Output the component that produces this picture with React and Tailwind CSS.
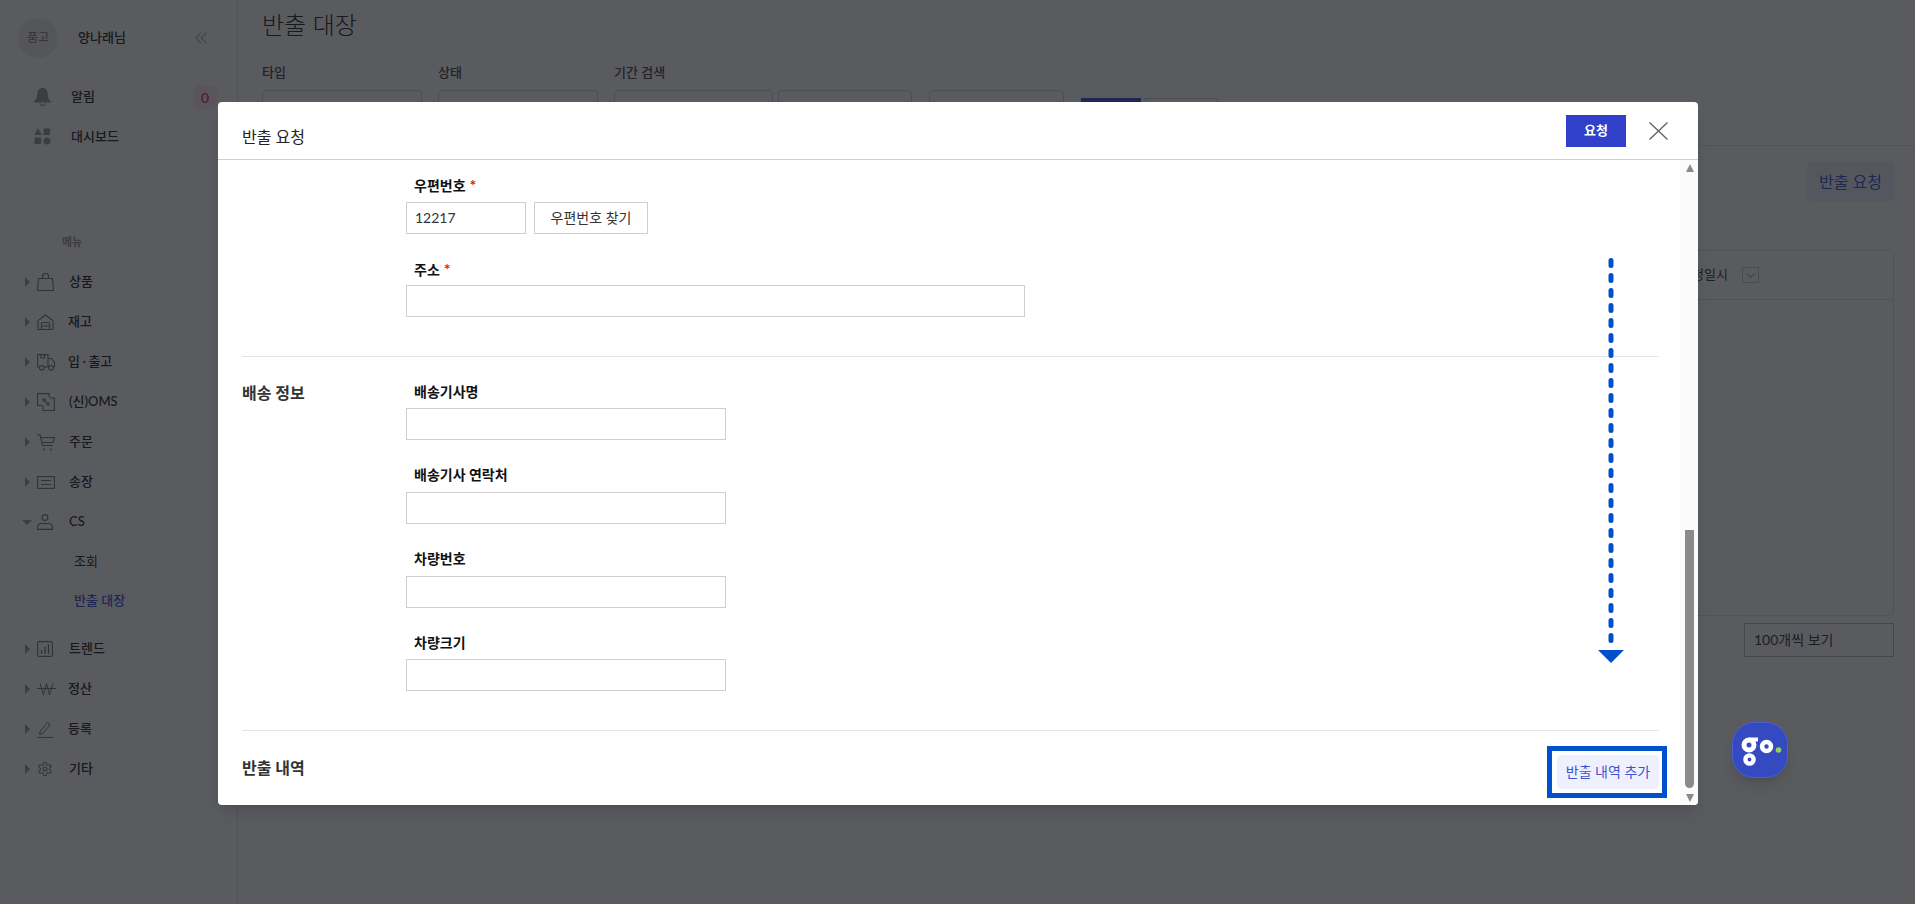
import React from 'react';

const FONT = { fontFamily: 'Lato, "Noto Sans CJK KR", sans-serif' };

// sidebar line icons
const IconBag = () => (
  <svg width="17" height="18" viewBox="0 0 17 18" fill="none" stroke="currentColor" strokeWidth="1.1">
    <path d="M1.500 5.500h14l1 12H.5z" />
    <path d="M5.500 5.500V3.500a3 3 0 0 1 6 0v2" />
  </svg>
);
const IconHouse = () => (
  <svg width="17" height="16" viewBox="0 0 17 16" fill="none" stroke="currentColor" strokeWidth="1.1">
    <path d="M1 15.500V6.500L8.500 1 16 6.500v9z" />
    <path d="M4.500 15.500V9.500q0-1 1-1h6q1 0 1 1v6M4.500 12h8" />
  </svg>
);
const IconTruck = () => (
  <svg width="18" height="17" viewBox="0 0 18 17" fill="none" stroke="currentColor" strokeWidth="1.1">
    <path d="M2.500 13H.6V.6h10.400V13H7" />
    <path d="M11 4.500h3.500l3 3.500v5h-1.500M11 13h1" />
    <path d="M4 .6v3.400h3.500V.6" />
    <circle cx="4.800" cy="13.800" r="2.300" />
    <circle cx="14" cy="13.800" r="2.300" />
  </svg>
);
const IconOms = () => (
  <svg width="18" height="18" viewBox="0 0 18 18" fill="none" stroke="currentColor" strokeWidth="1.1">
    <path d="M5.500 12.500H.6V.6h11.400V4" />
    <path d="M6 12.500v5h11.400V5H12.500" />
    <circle cx="7" cy="7" r="1.200" />
    <circle cx="11" cy="11" r="1.200" />
    <path d="M8 8l2 2" />
  </svg>
);
const IconCart = () => (
  <svg width="18" height="17" viewBox="0 0 18 17" fill="none" stroke="currentColor" strokeWidth="1.1">
    <path d="M0 .8h3l2.500 10.700h10" />
    <path d="M4 3.500h13.500l-1.500 5H5.300" />
    <path d="M6 15.500h1.500M13 15.500h1.500" strokeWidth="1.800" />
  </svg>
);
const IconList = () => (
  <svg width="18" height="13" viewBox="0 0 18 13" fill="none" stroke="currentColor" strokeWidth="1.1">
    <rect x=".6" y=".6" width="16.800" height="11.800" />
    <path d="M4 4.500h10M4 8.500h10" />
  </svg>
);
const IconUser = () => (
  <svg width="16" height="16" viewBox="0 0 16 16" fill="none" stroke="currentColor" strokeWidth="1.1">
    <circle cx="8" cy="3.500" r="2.900" />
    <path d="M.6 15.400v-2.400c0-2 2-3.500 3.400-3.500h8c1.400 0 3.400 1.500 3.400 3.500v2.400z" />
  </svg>
);
const IconChart = () => (
  <svg width="16" height="16" viewBox="0 0 16 16" fill="none" stroke="currentColor" strokeWidth="1.1">
    <rect x=".6" y=".6" width="14.800" height="14.800" rx="1.500" />
    <path d="M4.500 13V9M8 13V6M11.500 13V3.500" strokeWidth="1.300" />
  </svg>
);
const IconWon = () => (
  <svg width="19" height="13" viewBox="0 0 19 13" fill="none" stroke="currentColor" strokeWidth="1">
    <path d="M3 .5l3.500 11.500L9.500 .5l3 11.500L16 .5M0 5.500h19" />
  </svg>
);
const IconPen = () => (
  <svg width="16" height="17" viewBox="0 0 16 17" fill="none" stroke="currentColor" strokeWidth="1">
    <path d="M0 16.400h16" />
    <path d="M2.500 13.500l.7-3.500 7.300-8.500 2.600 2.200-7.300 8.500z" />
  </svg>
);
const IconGear = () => (
  <svg width="16" height="16" viewBox="0 0 24 24" fill="none" stroke="currentColor" strokeWidth="1.600">
    <path d="M12.220 2h-.44a2 2 0 0 0-2 2v.18a2 2 0 0 1-1 1.730l-.43.25a2 2 0 0 1-2 0l-.15-.08a2 2 0 0 0-2.730.73l-.22.38a2 2 0 0 0 .73 2.730l.15.1a2 2 0 0 1 1 1.720v.51a2 2 0 0 1-1 1.740l-.15.09a2 2 0 0 0-.73 2.730l.22.38a2 2 0 0 0 2.730.73l.15-.08a2 2 0 0 1 2 0l.43.25a2 2 0 0 1 1 1.730V20a2 2 0 0 0 2 2h.44a2 2 0 0 0 2-2v-.18a2 2 0 0 1 1-1.730l.43-.25a2 2 0 0 1 2 0l.15.08a2 2 0 0 0 2.730-.73l.22-.39a2 2 0 0 0-.73-2.730l-.15-.08a2 2 0 0 1-1-1.740v-.5a2 2 0 0 1 1-1.740l.15-.09a2 2 0 0 0 .73-2.730l-.22-.38a2 2 0 0 0-2.730-.73l-.15.08a2 2 0 0 1-2 0l-.43-.25a2 2 0 0 1-1-1.730V4a2 2 0 0 0-2-2z" />
    <circle cx="12" cy="12" r="3" />
  </svg>
);

const MENU_TOP = [
  { label: '상품', icon: <IconBag /> },
  { label: '재고', icon: <IconHouse />, tight: true },
  { label: <>입<span className="mx-[2.5px]">·</span>출고</>, icon: <IconTruck />, tight: true },
  { label: '(신)OMS', icon: <IconOms /> },
  { label: '주문', icon: <IconCart /> },
  { label: '송장', icon: <IconList /> },
];
const MENU_BOTTOM = [
  { label: '트렌드', icon: <IconChart /> },
  { label: '정산', icon: <IconWon />, tight: true },
  { label: '등록', icon: <IconPen />, tight: true },
  { label: '기타', icon: <IconGear /> },
];

function MenuRow({ label, icon, open, tight }) {
  return (
    <div className="flex h-10 items-center text-[13px] font-medium text-[#222]">
      <div className="flex w-[37px] justify-end pr-[7px]">
        {open ? (
          <span className="mr-[-2px] h-0 w-0 border-x-[5px] border-t-[5px] border-x-transparent border-t-[#999]" />
        ) : (
          <span className="h-0 w-0 border-y-[5px] border-l-[5px] border-y-transparent border-l-[#999]" />
        )}
      </div>
      <div className="flex w-[32px] justify-start text-[#777]">{icon}</div>
      <span className={tight ? '-ml-px' : ''}>{label}</span>
    </div>
  );
}

function Sidebar() {
  return (
    <aside className="h-full w-[238px] shrink-0 border-r border-[#e8e8ea] bg-white">
      <div className="flex items-center pl-[18px] pt-[18px]">
        <div className="flex h-10 w-10 items-center justify-center rounded-full bg-[#ededed] text-[12px] text-[#777]">품고</div>
        <span className="ml-5 text-[13px] font-medium text-[#222]">양나래님</span>
        <svg className="ml-[69px]" width="12" height="12" viewBox="0 0 12 12" fill="none" stroke="#888" strokeWidth="1">
          <path d="M6 .5L.8 6 6 11.500M11.500 .5L6.300 6l5.200 5.500" />
        </svg>
      </div>
      <div className="mt-[19px] flex h-[40px] items-center pl-[34px] text-[13px] font-medium text-[#222]">
        <svg width="17" height="18" viewBox="0 0 17 18" fill="#999">
          <path d="M8.500 0C5 0 3.300 2.500 3.300 6c0 3.500-1 5.500-3.300 7.500v1h17v-1c-2.300-2-3.300-4-3.300-7.500C13.700 2.500 12 0 8.500 0z" />
          <path d="M5.500 15.200a3 3 0 0 0 6 0h-1.200a1.800 1.800 0 0 1-3.600 0z" />
        </svg>
        <span className="ml-5">알림</span>
        <span className="ml-auto mr-[20px] flex h-6 w-6 items-center justify-center rounded-md bg-[#fdecee] text-[14px] text-[#d9303a]">0</span>
      </div>
      <div className="flex h-[39px] items-center pl-[34px] text-[13px] font-medium text-[#222]">
        <svg width="17" height="17" viewBox="0 0 17 17" fill="#999">
          <path d="M4 0l3.800 7H.2z" />
          <rect x="9.500" y="0.500" width="6.500" height="6.500" />
          <rect x="0.500" y="9.500" width="6.500" height="6.500" />
          <circle cx="13" cy="13" r="3.500" />
        </svg>
        <span className="ml-5">대시보드</span>
      </div>
      <div className="mt-[78px] pl-[62px] text-[11px] font-bold leading-4 text-[#9a9a9a]">메뉴</div>
      <nav className="mt-[12px]">
        {MENU_TOP.map((item, i) => <MenuRow key={i} {...item} />)}
        <MenuRow label="CS" icon={<IconUser />} open />
        <div className="flex h-[39px] items-center pl-[74px] text-[13px] text-[#222]">조회</div>
        <div className="flex h-[39px] items-center pl-[74px] text-[13px] font-medium text-[#3f51d0]">반출 대장</div>
        <div className="h-[9px]" />
        {MENU_BOTTOM.map((item, i) => <MenuRow key={i} {...item} />)}
      </nav>
    </aside>
  );
}

function FilterBox({ label, width }) {
  return (
    <div className={width}>
      <div className="h-5 text-[13px] font-medium leading-[18px] text-[#444]">{label || '\u00a0'}</div>
      <div className="mt-[7px] h-9 rounded border border-[#d8d8da] bg-white" />
    </div>
  );
}

function MainPage() {
  return (
    <main className="min-w-0 flex-1">
      <div className="px-6">
        <h1 className="pt-[9px] text-2xl font-light leading-8 text-[#222]">반출 대장</h1>
        <div className="mt-[22px] flex items-start gap-4">
          <FilterBox label="타입" width="w-[160px]" />
          <FilterBox label="상태" width="w-[160px]" />
          <div className="flex w-[299px] gap-[5px]">
            <FilterBox label="기간 검색" width="w-[159px]" />
            <FilterBox width="w-[134px]" />
          </div>
          <FilterBox width="w-[135px]" />
          <div className="ml-px flex gap-1 pt-[35px]">
            <div className="h-9 w-[60px] bg-[#3f51d0]" />
            <div className="h-9 w-[73px] border border-[#d0d0d0] bg-white" />
          </div>
        </div>
      </div>
      <div className="mt-[11px] border-t border-[#e5e5e7] px-[21px] pl-6">
        <div className="flex justify-end pt-4">
          <div className="flex h-[39px] w-[87px] items-center justify-center rounded bg-[#eef1fd] text-base text-[#3f51d0]">반출 요청</div>
        </div>
        <div className="mt-[49px] h-[366px] rounded-md border border-[#e2e2e4]">
          <div className="flex h-[49px] items-center justify-end border-b border-[#e2e2e4] pr-[134px] text-[13px] text-[#333]">
            <span>요청일시</span>
            <span className="ml-[14px] flex h-4 w-[17px] items-center justify-center border border-[#ccc] text-[#888]">
              <svg width="9" height="5" viewBox="0 0 9 5" fill="none" stroke="currentColor"><path d="M.5.500l4 4 4-4" /></svg>
            </span>
          </div>
        </div>
        <div className="mt-[7px] flex justify-end">
          <div className="flex h-[34px] w-[150px] items-center border border-[#bdbdbd] pl-[9px] text-sm text-[#333]">100개씩 보기</div>
        </div>
      </div>
    </main>
  );
}

function Field({ label, required, inputClass, children, last }) {
  return (
    <div className={last ? '' : 'mb-6'}>
      <div className="mb-[7.67px] h-5 pl-2 text-sm font-bold leading-[22px] text-[#111]">
        {label}
        {required && <span className="ml-1 text-base leading-[22px] text-[#e02020]">*</span>}
      </div>
      <div className="flex gap-2">
        <input readOnly defaultValue={children} className={`h-8 border border-[#cfcfcf] bg-white px-2 text-sm text-[#333] outline-none ${inputClass}`} />
        {label === '우편번호' && (
          <div className="flex h-8 w-[114px] items-center justify-center border border-[#cfcfcf] text-sm text-[#333]">우편번호 찾기</div>
        )}
      </div>
    </div>
  );
}

function Modal() {
  return (
    <div className="absolute left-[218px] top-[102px] flex h-[703px] w-[1480px] flex-col overflow-hidden rounded bg-white shadow-lg">
      <header className="flex h-[58px] shrink-0 items-start border-b border-[#cfcfcf] pl-6 pr-[30px] pt-[13px]">
        <h2 className="mt-[10px] text-base leading-6 text-[#222]">반출 요청</h2>
        <button className="ml-auto flex h-8 w-[60px] items-center justify-center bg-[#3040c8] text-[13px] font-bold text-white">요청</button>
        <svg className="ml-[23px] mt-[7px]" width="19" height="18" viewBox="0 0 19 18" fill="none" stroke="#666" strokeWidth="1.4">
          <path d="M.5.500l18 17M18.500.500l-18 17" />
        </svg>
      </header>
      <div className="relative flex min-h-0 flex-1">
        <div className="min-w-0 flex-1 overflow-hidden pl-6 pr-[21px]">
          <section className="border-b border-[#e4e4ea] pb-[15px] pl-[164px] pt-[14px]">
            <Field label="우편번호" required inputClass="w-[120px]">12217</Field>
            <Field label="주소" required inputClass="w-[619px]" />
          </section>
          <section className="flex border-b border-[#e4e4ea] pb-[15px] pt-[23.5px]">
            <h3 className="w-[164px] shrink-0 text-base font-bold leading-6 text-[#333]">배송 정보</h3>
            <div className="flex-1">
              <Field label="배송기사명" inputClass="w-[320px]" />
              <Field label="배송기사 연락처" inputClass="w-[320px]" />
              <Field label="차량번호" inputClass="w-[320px]" />
              <Field label="차량크기" inputClass="w-[320px]" />
            </div>
          </section>
          <section className="flex items-start justify-between pt-6">
            <h3 className="mt-px text-base font-bold leading-6 text-[#333]">반출 내역</h3>
            <div className="relative">
              <button className="flex h-[34px] w-[102px] items-center justify-center whitespace-nowrap rounded bg-[#eef1fd] text-sm text-[#3f51d0]">반출 내역 추가</button>
              <div className="pointer-events-none absolute -bottom-[9px] -left-[10px] -right-2 -top-[9px] border-[5px] border-[#0050cc]" />
            </div>
          </section>
        </div>
        {/* scrollbar */}
        <div className="flex w-[18px] shrink-0 flex-col items-center bg-[#fbfbfb] pl-[1px]">
          <span className="mt-[4px] h-0 w-0 border-x-[4.500px] border-b-[8px] border-x-transparent border-b-[#8a8a8a]" />
          <div className="mt-[358px] h-[258px] w-[9px] rounded-b-md bg-[#8a8a8a]" />
          <span className="mt-[6px] h-0 w-0 border-x-[4.500px] border-t-[8px] border-x-transparent border-t-[#8a8a8a]" />
        </div>
        {/* scroll hint drawn over the form */}
        <svg className="pointer-events-none absolute left-[1380px] top-[98px]" width="27" height="406" viewBox="0 0 27 406" fill="none">
          <path d="M13 2.500V390" stroke="#0050cc" strokeWidth="5" strokeLinecap="round" strokeDasharray="5 10" />
          <path d="M0 392h26l-13 13z" fill="#0050cc" />
        </svg>
      </div>
    </div>
  );
}

function GoBadge() {
  return (
    <div className="absolute left-[1732px] top-[722px] h-14 w-14 rounded-[22px] border border-[#4a5fd0] bg-[#3549c0] shadow-lg">
      <svg width="54" height="54" viewBox="1 1 54 54" fill="none" stroke="#fff">
        <circle cx="17" cy="23" r="5" strokeWidth="5" />
        <circle cx="17.500" cy="37.500" r="4.100" strokeWidth="4.400" />
        <path d="M17 17.500h9" strokeWidth="4" />
        <circle cx="34.500" cy="24.500" r="4.500" strokeWidth="4.500" />
        <circle cx="46.500" cy="28" r="2.800" fill="#8ed35a" stroke="none" />
      </svg>
    </div>
  );
}

export default function App() {
  return (
    <div className="relative flex h-[904px] w-full overflow-hidden bg-white" style={FONT}>
      <Sidebar />
      <MainPage />
      <div className="absolute inset-0 bg-[#14161b]/70" />
      <Modal />
      <GoBadge />
    </div>
  );
}
